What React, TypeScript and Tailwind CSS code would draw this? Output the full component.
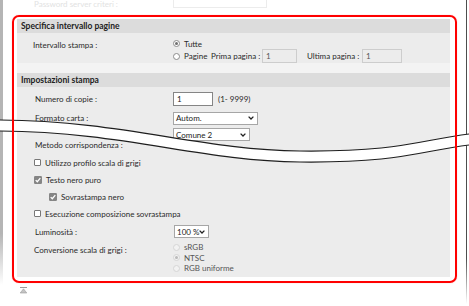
import React from "react";

const font = "font-['Lato','Noto_Sans','Liberation_Sans',sans-serif]";

function Radio({ on, dim }: { on?: boolean; dim?: boolean }) {
  return (
    <span
      className={`flex h-[7px] w-[7px] shrink-0 items-center justify-center rounded-full border ${
        dim ? "border-[#d6d6d6] bg-[#f2f2f2]" : "border-[#8c8c8c] bg-white"
      } ${on && !dim ? "bg-[#d8d8d8]" : ""}`}
    >
      {on && <span className={`h-[3px] w-[3px] rounded-full ${dim ? "bg-[#b9b9b9]" : "bg-[#6f6f6f]"}`} />}
    </span>
  );
}

function Check({ on }: { on?: boolean }) {
  if (!on) return <span className="h-[7px] w-[7px] shrink-0 rounded-[1px] border border-[#777] bg-white" />;
  return (
    <svg width="8" height="8" viewBox="0 0 8 8" className="shrink-0">
      <rect x="0" y="0" width="8" height="8" rx="1.2" fill="#858585" />
      <path d="M1.7 4.1 L3.3 5.7 L6.3 2.2" stroke="#fff" strokeWidth="1.3" fill="none" />
    </svg>
  );
}

function Select({ value, w }: { value: string; w: string }) {
  return (
    <div className={`flex h-[13px] ${w} items-center justify-between border border-[#a6a6a6] bg-white pl-[2px] pr-[3px] text-[#222]`}>
      <span>{value}</span>
      <svg width="6" height="4" viewBox="0 0 6 4" className="shrink-0">
        <path d="M0.6 0.6 L3 3 L5.4 0.6" stroke="#222" strokeWidth="1.3" fill="none" />
      </svg>
    </div>
  );
}

export default function App() {
  return (
    <div className={`relative h-[306px] w-[469px] overflow-hidden whitespace-nowrap bg-white text-[8px] leading-[12px] text-[#2a2a2a] ${font}`}>
      {/* window edges */}
      <div className="absolute left-0 top-0 h-[285px] w-[3px] bg-[linear-gradient(to_bottom,#b5b5b5_82%,transparent)]" />
      <div className="absolute right-[2px] top-0 h-[304px] w-px bg-[linear-gradient(to_bottom,#4d4d4d_85%,transparent)]" />

      {/* faded row above */}
      <div className="flex h-[15px] items-start">
        <span className="ml-[34px] w-[139px] leading-[9px] text-[#e2e2e2]">Password server criteri :</span>
        <span className="-mt-[6px] h-[14px] w-[94px] border border-[#ececec]" />
      </div>

      {/* highlighted box */}
      <div className="ml-[12px] h-[268px] w-[445px] rounded-[7px] border-2 border-[#ff0000] pb-[4px] pl-[3px] pr-[5px] pt-[2px] shadow-[0_0_1px_#ff9a9a]">
        <div className="flex h-[14px] items-center bg-[#dcdcdc] pl-[4px] text-[8.5px] font-bold text-[#222]">Specifica intervallo pagine</div>
        <div className="flex h-[30px] bg-[#ececec]">
          <div className="w-[156px] pl-[16px] pt-[6px]">Intervallo stampa :</div>
          <div className="flex flex-col pt-[5px]">
            <div className="flex h-[11px] items-center gap-[4px]">
              <Radio on />
              <span>Tutte</span>
            </div>
            <div className="flex h-[14px] items-center">
              <Radio />
              <span className="ml-[4px] w-[27px]">Pagine</span>
              <span className="w-[51px]">Prima pagina :</span>
              <span className="flex h-[14px] w-[35px] items-center border border-[#cdcdcd] bg-[#ececec] pl-[3px] text-[#555]">1</span>
              <span className="ml-[10px] w-[55px]">Ultima pagina :</span>
              <span className="flex h-[14px] w-[40px] items-center border border-[#cdcdcd] bg-[#ececec] pl-[3px] text-[#555]">1</span>
            </div>
          </div>
        </div>
        <div className="h-[10px] bg-[#f3f3f3]" />
        <div className="flex h-[14px] items-center bg-[#dcdcdc] pl-[4px] text-[8.5px] font-bold text-[#222]">Impostazioni stampa</div>
        <div className="h-[190px] bg-[#ececec]">
          <div className="flex h-[24px] items-center">
            <span className="w-[156px] pl-[18px]">Numero di copie :</span>
            <span className="flex h-[14px] w-[40px] items-center border border-[#858585] bg-white pl-[3px] text-[#222]">1</span>
            <span className="ml-[5px]">(1- 9999)</span>
          </div>
          <div className="flex h-[14px] items-center">
            <span className="w-[156px] pl-[18px]">Formato carta :</span>
            <Select value="Autom." w="w-[85px]" />
          </div>
          <div className="flex h-[29px] items-start">
            <span className="mt-[14px] w-[156px] pl-[18px]">Metodo corrispondenza :</span>
            <div className="mt-[3px]">
              <Select value="Comune 2" w="w-[77px]" />
            </div>
          </div>
          <div className="flex h-[17px] items-center gap-[4px] pl-[17px]">
            <Check />
            <span>Utilizzo profilo scala di grigi</span>
          </div>
          <div className="flex h-[17px] items-center gap-[4px] pl-[17px]">
            <Check on />
            <span>Testo nero puro</span>
          </div>
          <div className="flex h-[17px] items-center gap-[4px] pl-[32px]">
            <Check on />
            <span>Sovrastampa nero</span>
          </div>
          <div className="flex h-[17px] items-center gap-[4px] pl-[17px]">
            <Check />
            <span>Esecuzione composizione sovrastampa</span>
          </div>
          <div className="flex h-[19px] items-center">
            <span className="w-[157px] pl-[18px]">Luminosità :</span>
            <Select value="100 %" w="w-[35px]" />
          </div>
          <div className="flex h-[36px] items-start">
            <span className="mt-[3px] w-[156px] pl-[17px]">Conversione scala di grigi :</span>
            <div className="mt-[1px] flex flex-col text-[#555]">
              <div className="flex h-[10px] items-center gap-[4px]">
                <Radio dim />
                <span>sRGB</span>
              </div>
              <div className="flex h-[11px] items-center gap-[4px]">
                <Radio dim on />
                <span>NTSC</span>
              </div>
              <div className="flex h-[10px] items-center gap-[4px]">
                <Radio dim />
                <span>RGB uniforme</span>
              </div>
            </div>
          </div>
        </div>
      </div>

      {/* back to top icon */}
      <div className="ml-[20px] mt-[4px]">
        <svg width="7" height="7" viewBox="0 0 7 7">
          <rect x="0" y="0" width="7" height="1" fill="#9c9c9c" />
          <path d="M3.5 1.8 L6.8 6 L0.2 6 Z" fill="#c4c4c4" stroke="#9c9c9c" strokeWidth="0.6" />
        </svg>
      </div>

      {/* page break cut */}
      <svg className="pointer-events-none absolute left-0 top-0" width="469" height="306" viewBox="0 0 469 306">
        <path
          d="M0,120 C125,121 200,150 300,151 C400,152 420,140 469,134 L469,145 C420,151 400,163 300,162 C200,161 125,132 0,131 Z"
          fill="#fff"
        />
        <path d="M0,120 C125,121 200,150 300,151 C400,152 420,140 469,134" stroke="#1e1e1e" strokeWidth="1.2" fill="none" />
        <path d="M0,131 C125,132 200,161 300,162 C400,163 420,151 469,145" stroke="#1e1e1e" strokeWidth="1.2" fill="none" />
        <line x1="13" y1="110" x2="13" y2="145" stroke="#ff0000" strokeWidth="2" />
        <line x1="456" y1="130" x2="456" y2="170" stroke="#ff0000" strokeWidth="2" />
      </svg>
    </div>
  );
}
